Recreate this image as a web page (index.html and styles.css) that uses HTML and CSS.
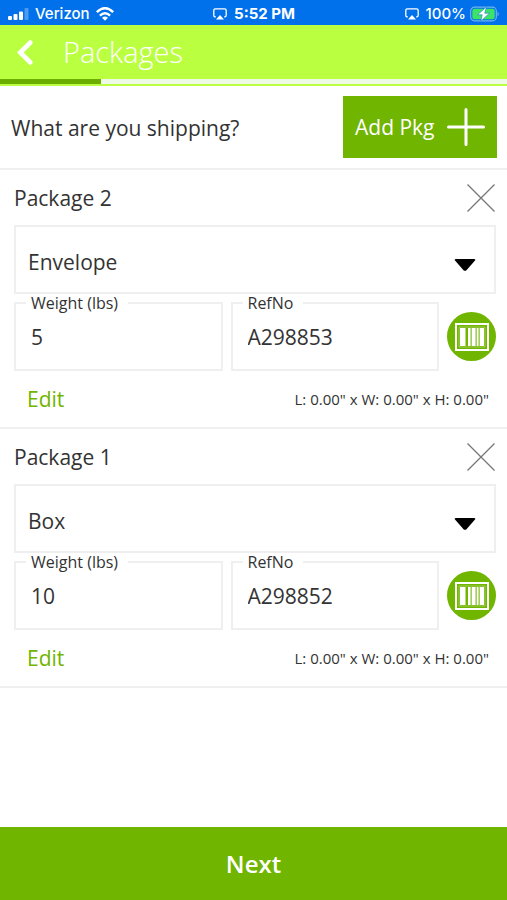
FILE: index.html
```html
<!DOCTYPE html>
<html lang="en">
<head>
<meta charset="utf-8">
<meta name="viewport" content="width=device-width, initial-scale=1">
<title>Packages</title>
<link rel="stylesheet" href="styles.css">
</head>
<body>
<svg class="symbols" aria-hidden="true">
  <symbol id="airplay" viewBox="0 0 14 12">
    <path d="M2.800 8.900H2.400Q.8 8.900 .8 7.300V2.400Q.8.8 2.400.8h9.200q1.600 0 1.600 1.600v4.900q0 1.600-1.600 1.600h-.4" fill="none" stroke="currentColor" stroke-width="1.300"/>
    <path d="M7 7 11 11.500H3z" fill="currentColor"/>
  </symbol>
  <symbol id="close" viewBox="0 0 28 28">
    <path d="M.5.5l27 27M27.500.5l-27 27" fill="none" stroke="currentColor" stroke-width="1.300"/>
  </symbol>
  <symbol id="caret" viewBox="0 0 22 12">
    <path d="M2 0h18q2 0 1 1.500l-8.500 9.700q-1.500 1.300-3 0L1 1.500Q0 0 2 0z" fill="currentColor"/>
  </symbol>
  <symbol id="barcode" viewBox="0 0 34 28">
    <path d="M1 1h32v26H1z" fill="none" stroke="currentColor" stroke-width="2"/>
    <path d="M4 4h26v20H4z" fill="none" stroke="currentColor" stroke-width="1" opacity=".35"/>
    <path d="M5 5h5.500v18H5zM13 5h2.500v18H13zM17 5h3.500v18H17zM22 5h1.500v18H22zM25 5h4v18h-4z" fill="currentColor"/>
    <path d="M15.500 5H17v18h-1.500zM20.500 5H22v18h-1.500zM23.500 5H25v18h-1.500z" fill="currentColor" opacity=".35"/>
  </symbol>
</svg>
<div class="app">
  <div class="status">
    <div class="status-side">
      <svg class="signal" viewBox="0 0 21 12" aria-hidden="true">
        <g fill="currentColor"><rect y="8" width="4" height="4" rx="1"/><rect x="5.500" y="6" width="4" height="6" rx="1"/><rect x="11" y="3.500" width="4" height="8.500" rx="1"/><rect x="16.500" y="0" width="4" height="12" rx="1" opacity=".3"/></g>
      </svg>
      <span>Verizon</span>
      <svg class="wifi" viewBox="0 0 18 14" aria-hidden="true">
        <g fill="none" stroke="currentColor" stroke-width="2.500"><path d="M.8 5.200Q9-2.600 17.200 5.200"/><path d="M3.900 8.600q5.100-4.700 10.200 0"/></g>
        <path d="M9 13.700 6 10.800q3-2.500 6 0z" fill="currentColor"/>
      </svg>
    </div>
    <div class="status-time"><svg class="airplay" aria-hidden="true"><use href="#airplay"/></svg><span>5:52 PM</span></div>
    <div class="status-side status-end">
      <svg class="airplay" aria-hidden="true"><use href="#airplay"/></svg>
      <span>100%</span>
      <svg class="battery" viewBox="0 0 30 16" aria-hidden="true">
        <rect x=".7" y="1.200" width="25.600" height="13.600" rx="3.800" fill="none" stroke="#6fb4ee" stroke-width="1.200"/>
        <rect x="2.300" y="2.800" width="22.400" height="10.400" rx="2.200" fill="#3de366"/>
        <path d="M27.500 5.500q2.500 2.500 0 5z" fill="#6fb4ee"/>
        <path d="M16.500.8 7.500 8.800h4.700L10.800 15.200 19.500 7.200h-4.800z" fill="#fff" stroke="#1676dd" stroke-width=".6"/>
      </svg>
    </div>
  </div>
  <header class="header">
    <button class="back" type="button" aria-label="Back">
      <svg viewBox="0 0 16 24" aria-hidden="true"><path d="M13.500 2.500 4 12l9.500 9.500" fill="none" stroke="currentColor" stroke-width="4.500" stroke-linecap="round"/></svg>
    </button>
    <h1>Packages</h1>
  </header>
  <div class="progress"><div class="progress-bar"></div></div>
  <main class="content">
    <section class="ask">
      <h2>What are you shipping?</h2>
      <button class="add" type="button"><span>Add Pkg</span>
        <svg viewBox="0 0 38 38" aria-hidden="true"><path d="M19 1.500v35M1.500 19h35" stroke="currentColor" stroke-width="3" stroke-linecap="round"/></svg>
      </button>
    </section>
    <section class="package">
      <div class="package-head">
        <h2>Package 2</h2>
        <button class="remove" type="button" aria-label="Remove package 2"><svg aria-hidden="true"><use href="#close"/></svg></button>
      </div>
      <div class="select">
        <select aria-label="Package 2 type"><option selected>Envelope</option><option>Box</option></select>
        <svg aria-hidden="true"><use href="#caret"/></svg>
      </div>
      <div class="fields">
        <div class="field"><label for="weight2">Weight (lbs)</label><input id="weight2" type="text" value="5"></div>
        <div class="field"><label for="ref2">RefNo</label><input id="ref2" type="text" value="A298853"></div>
        <button class="scan" type="button" aria-label="Scan barcode"><svg aria-hidden="true"><use href="#barcode"/></svg></button>
      </div>
      <div class="package-foot"><a href="#edit2">Edit</a><p>L: 0.00" x W: 0.00" x H: 0.00"</p></div>
    </section>
    <section class="package">
      <div class="package-head">
        <h2>Package 1</h2>
        <button class="remove" type="button" aria-label="Remove package 1"><svg aria-hidden="true"><use href="#close"/></svg></button>
      </div>
      <div class="select">
        <select aria-label="Package 1 type"><option>Envelope</option><option selected>Box</option></select>
        <svg aria-hidden="true"><use href="#caret"/></svg>
      </div>
      <div class="fields">
        <div class="field"><label for="weight1">Weight (lbs)</label><input id="weight1" type="text" value="10"></div>
        <div class="field"><label for="ref1">RefNo</label><input id="ref1" type="text" value="A298852"></div>
        <button class="scan" type="button" aria-label="Scan barcode"><svg aria-hidden="true"><use href="#barcode"/></svg></button>
      </div>
      <div class="package-foot"><a href="#edit1">Edit</a><p>L: 0.00" x W: 0.00" x H: 0.00"</p></div>
    </section>
  </main>
  <button class="next" type="button">Next</button>
</div>
</body>
</html>
```
FILE: styles.css
```css
* { box-sizing: border-box; }
body {
  margin: 0;
  background: #fff;
  color: #333;
  font-family: "Open Sans", sans-serif;
  font-size: 21px;
  line-height: 28px;
}
h1, h2, p { margin: 0; font-size: inherit; font-weight: 400; }
button, input, select { font: inherit; color: inherit; border: 0; border-radius: 0; padding: 0; margin: 0; background: none; }
svg { display: block; flex: none; }
.symbols { position: absolute; width: 0; height: 0; }
.app { display: flex; flex-direction: column; min-height: 100vh; }

.status {
  display: grid;
  grid-template-columns: 1fr auto 1fr;
  align-items: center;
  height: 25px;
  padding: 2px 7px 0 8px;
  background: #0070eb;
  color: #fff;
  font: 500 15px/22px Inter, sans-serif;
}
.status-side, .status-time { display: flex; align-items: center; gap: 6px; }
.status-time { font-weight: 700; gap: 7px; }
.status-end { justify-content: flex-end; gap: 4px; }
.signal { width: 21px; height: 12px; }
.wifi { width: 18px; height: 14px; }
.airplay { width: 14px; height: 12px; }
.status-end .airplay { margin-right: 3px; }
.battery { width: 30px; height: 16px; }

.header { display: flex; align-items: center; height: 54px; padding-left: 16px; background: #baff40; color: #fff; }
.back { display: flex; width: 47px; height: 40px; align-items: center; }
.back svg { width: 17px; height: 25px; }
h1 { font-size: 29px; font-weight: 300; line-height: 40px; }
.progress { height: 7px; background: #eefae6; border-bottom: 2px solid #baff40; }
.progress-bar { width: 20%; height: 5px; background: #6cae00; }

.content { flex: 1; }
.ask { display: flex; align-items: center; justify-content: space-between; padding: 10px 10px 10px 11px; border-bottom: 2px solid #efefef; }
.ask h2 { padding-top: 2px; }
.add { display: flex; align-items: center; justify-content: space-between; width: 154px; height: 62px; padding: 0 12px; background: #70b500; color: #fff; }
.add svg { width: 38px; height: 38px; }

.package { padding: 8px 11px 14px 14px; border-bottom: 2px solid #efefef; }
.package-head { display: flex; align-items: center; justify-content: space-between; height: 40px; margin-bottom: 7px; }
.remove { color: #777; padding: 0 1px; }
.remove svg { width: 28px; height: 28px; }
.select { position: relative; margin-bottom: 8px; }
.select select { display: block; width: 100%; height: 69px; padding: 4px 60px 0 12px; border: 2px solid #efefef; appearance: none; background: #fff; }
.select svg { position: absolute; right: 20px; top: 34px; width: 22px; height: 12px; color: #000; pointer-events: none; }
.fields { display: flex; align-items: center; gap: 8px; }
.field { position: relative; flex: 1; min-width: 0; }
.field label { position: absolute; left: 12px; top: -8px; padding: 0 10px 0 5px; background: #fff; font-size: 16px; line-height: 18px; }
.field input { display: block; width: 100%; height: 69px; padding: 0 15px; border: 2px solid #efefef; }
.scan { display: flex; align-items: center; justify-content: center; width: 49px; height: 49px; border-radius: 50%; background: #70b500; color: #fff; }
.scan svg { width: 34px; height: 28px; }
.package-foot { display: flex; align-items: center; justify-content: space-between; padding: 14px 7px 0 13px; }
.package-foot a { color: #70b500; text-decoration: none; }
.package-foot p { font-size: 15px; }

.next { width: 100%; height: 73px; background: #70b500; color: #fff; font-size: 24px; font-weight: 600; }
```
